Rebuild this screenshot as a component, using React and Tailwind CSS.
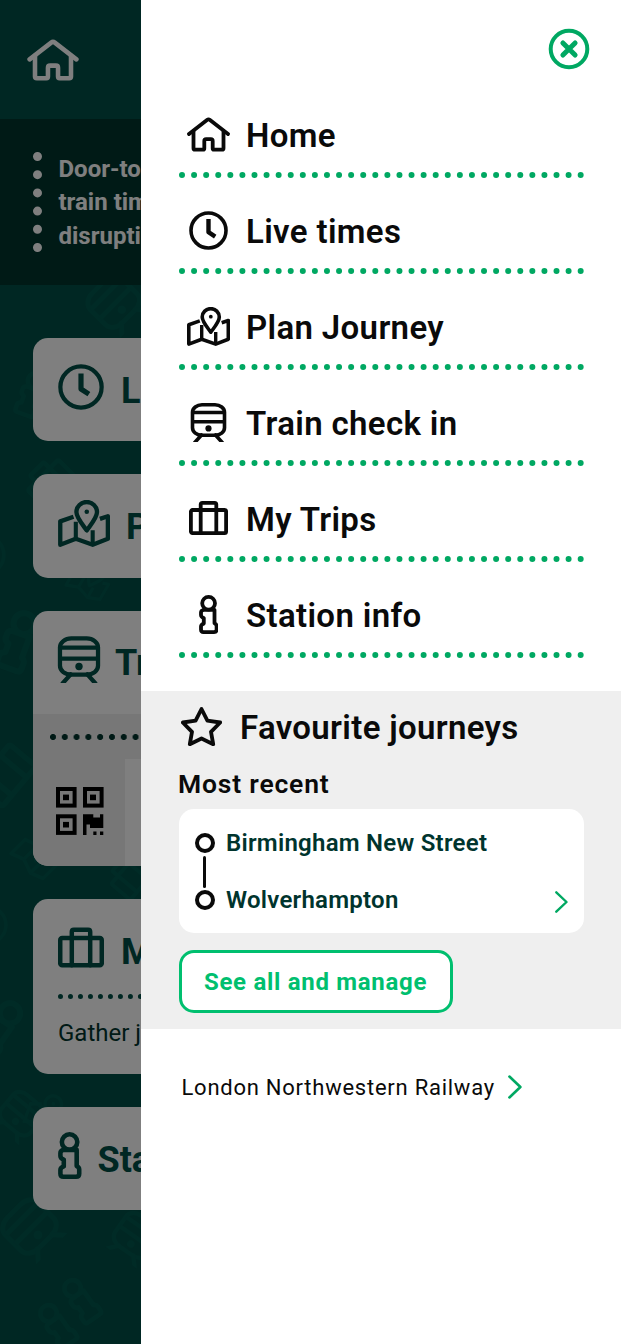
import React from "react";

function Svg({ w, h, stroke = 3.8, children, ...props }) {
  return (
    <svg
      viewBox={`0 0 ${w} ${h}`}
      fill="none"
      stroke="currentColor"
      strokeWidth={stroke}
      strokeLinecap="round"
      strokeLinejoin="round"
      {...props}
    >
      {children}
    </svg>
  );
}

function HomeIcon(props) {
  return (
    <Svg w={43} h={35} {...props}>
      <path d="M2 17 20 3Q21.5 1.8 23 3L41 17" />
      <path d="M6.5 14v17.2q0 1.5 1.5 1.5h8q1.3 0 1.3-1.5V24q0-1.8 1.8-1.8h4.8q1.8 0 1.8 1.8v7.2q0 1.5 1.3 1.5h8q1.5 0 1.5-1.5V14" />
    </Svg>
  );
}

function ClockIcon(props) {
  return (
    <Svg w={39} h={39} stroke={3.6} {...props}>
      <circle cx="19.5" cy="19.5" r="17.5" />
      <path d="M19.5 8v13.2l6.7 4.4" strokeWidth="4.4" strokeLinecap="butt" />
    </Svg>
  );
}

function MapIcon(props) {
  return (
    <Svg w={43} h={39} stroke={3.6} {...props}>
      <path d="M12.8 13.9 1.8 17.7v19.4l12.9-4.9 14 4.9 12.6-4.9V13.5l-6.6 2.2" strokeLinecap="butt" />
      <path d="M14.7 18v14.2M28.7 25v12.1" strokeLinecap="butt" strokeWidth="3.4" />
      <path d="M23.8 25.2c-4.4-6-8.6-10.6-8.6-15.2a8.5 8.3 0 0 1 17.1 0c0 4.6-4.1 9.2-8.5 15.2z" />
      <circle cx="23.8" cy="9.7" r="1.9" fill="currentColor" stroke="none" />
    </Svg>
  );
}

function TrainIcon(props) {
  return (
    <Svg w={37} h={39} stroke={3.6} {...props}>
      <rect x="2.5" y="1.8" width="32" height="30.5" rx="9.5" ry="7.5" />
      <path d="M3 9.5h31M3 18.7h31" strokeLinecap="butt" />
      <path d="M11.5 32 4.8 39.5M25.5 32l6.7 7.5" />
      <circle cx="18.5" cy="25.4" r="3.1" fill="currentColor" stroke="none" />
    </Svg>
  );
}

function CaseIcon(props) {
  return (
    <Svg w={39} h={34} {...props}>
      <rect x="1.9" y="9" width="35.2" height="23.1" rx="1.6" />
      <path d="M11.7 32V3.6q0-1.7 1.7-1.7h12.2q1.7 0 1.7 1.7V32" />
    </Svg>
  );
}

function InfoIcon(props) {
  return (
    <Svg w={19.5} h={39} {...props}>
      <circle cx="9.6" cy="8.3" r="6.4" />
      <path d="M4.8 14.8Q2 15.4 2 17.5V20q0 2 2.8 3v5.6Q2 29.6 2 31.5v3.1q0 2.5 2.5 2.5H15q2.6 0 2.6-2.5v-3.4q0-2-2.1-2.9V14.8z" />
    </Svg>
  );
}

function StarIcon(props) {
  return (
    <Svg w={41} h={39} {...props}>
      <path d="M20.5 2l5.900 11.700 12.800 1.800-9.200 9.300 2.200 12.400-11.700-5.700-11.700 5.700 2.200-12.400L1.800 15.500l12.800-1.800z" />
    </Svg>
  );
}

function CloseIcon(props) {
  return (
    <Svg w={42} h={42} stroke={4} {...props}>
      <circle cx="21" cy="21" r="18.3" />
      <path d="M14.900 14.900l12.200 12.200M27.100 14.900 14.900 27.100" strokeWidth="5" />
    </Svg>
  );
}

function Chevron(props) {
  return (
    <Svg w={13} h={22} stroke={2.4} {...props}>
      <path d="M1.300 1.300 11.500 11 1.300 20.700" />
    </Svg>
  );
}

function QrIcon(props) {
  const finders = [
    [0, 0],
    [27, 0],
    [0, 27.3],
  ];
  return (
    <svg viewBox="0 0 48 48" fill="currentColor" {...props}>
      {finders.map(([x, y]) => (
        <g key={`${x}-${y}`}>
          <rect x={x + 2} y={y + 2} width="16.600" height="16.600" fill="none" stroke="currentColor" strokeWidth="4" />
          <rect x={x + 7} y={y + 7.6} width="6" height="5.600" />
        </g>
      ))}
      <path d="M27 27.300h10.300v3.300H44v-3.300h3.300V41H34v-3.500h-3.500V48H27z" />
      <path d="M37.300 44.500h3.200V48h-3.200zM44 44.500h3.300V48H44z" />
    </svg>
  );
}

const doodles = [
  { Icon: TrainIcon, x: 116, y: 304, size: 54, rotate: -45 },
  { Icon: InfoIcon, x: 31, y: 394, size: 48, rotate: 20 },
  { Icon: CaseIcon, x: 50, y: 482, size: 48, rotate: -45 },
  { Icon: ClockIcon, x: -15, y: 555, size: 42, rotate: 0 },
  { Icon: MapIcon, x: 90, y: 580, size: 40, rotate: 30 },
  { Icon: InfoIcon, x: 18, y: 641, size: 64, rotate: 20 },
  { Icon: CaseIcon, x: 2, y: 772, size: 58, rotate: -50 },
  { Icon: MapIcon, x: 38, y: 855, size: 44, rotate: 45 },
  { Icon: CaseIcon, x: 130, y: 875, size: 42, rotate: -50 },
  { Icon: ClockIcon, x: -12, y: 925, size: 40, rotate: 0 },
  { Icon: InfoIcon, x: 0, y: 1028, size: 62, rotate: 35 },
  { Icon: TrainIcon, x: 20, y: 1116, size: 46, rotate: 40 },
  { Icon: MapIcon, x: 48, y: 1112, size: 42, rotate: 20 },
  { Icon: TrainIcon, x: 32, y: 1229, size: 56, rotate: -45 },
  { Icon: TrainIcon, x: 135, y: 1238, size: 48, rotate: 35 },
  { Icon: InfoIcon, x: 81, y: 1300, size: 50, rotate: -35 },
  { Icon: InfoIcon, x: 57, y: 1325, size: 50, rotate: -35 },
];

function Doodles() {
  return (
    <svg className="absolute inset-0 h-full w-full text-[#00564d]" viewBox="0 0 621 1344">
      {doodles.map(({ Icon, x, y, size, rotate }) => (
        <g key={`${x}-${y}`} transform={`translate(${x} ${y}) rotate(${rotate})`}>
          <Icon x={-size / 2} y={-size / 2} width={size} height={size} />
        </g>
      ))}
    </svg>
  );
}

const menuItems = [
  { label: "Home", Icon: HomeIcon, size: "h-[35px] w-[43px]" },
  { label: "Live times", Icon: ClockIcon, size: "h-[39px] w-[39px]" },
  { label: "Plan Journey", Icon: MapIcon, size: "h-[39px] w-[43px]" },
  { label: "Train check in", Icon: TrainIcon, size: "h-[39px] w-[37px]" },
  { label: "My Trips", Icon: CaseIcon, size: "h-[34px] w-[39px]" },
  { label: "Station info", Icon: InfoIcon, size: "h-[39px] w-[19.500px]" },
];

function HomePage() {
  const title = "whitespace-nowrap text-[36px] leading-[44px] font-bold";
  const card = "overflow-hidden rounded-[15px] bg-white";

  return (
    <div className="relative h-full w-full bg-[#004e46] text-[#004e46]">
      <Doodles />
      <div className="relative flex flex-col">
        <header className="flex h-[119px] items-center bg-[#004e46] pl-[27px] text-white">
          <HomeIcon className="h-[42px] w-[52px]" />
        </header>

        <div className="flex h-[166px] items-center bg-[#00342d] pl-[33px] text-white">
          <div className="mb-px h-[100px] border-l-9 border-dotted border-white" />
          <p className="mt-0.5 pl-[16.500px] text-[24px] leading-[33.500px] font-bold whitespace-nowrap">
            Door-to-door
            <br />
            train times and
            <br />
            disruption
          </p>
        </div>

        <main className="flex flex-col gap-[33px] px-[33px] pt-[53px]">
          <section className={`${card} flex h-[103px] items-start gap-[17px] pt-[25.500px] pl-[25px]`}>
            <ClockIcon className="h-[46px] w-[46px]" />
            <h2 className={`${title} mt-[5px]`}>Live times</h2>
          </section>

          <section className={`${card} flex h-[104px] items-start gap-4 pt-[26px] pl-[25px]`}>
            <MapIcon className="h-[47px] w-[52px]" />
            <h2 className={`${title} mt-[5px]`}>Plan Journey</h2>
          </section>

          <section className={`${card} h-[255px]`}>
            <div className="flex h-[103px] items-start gap-[14px] pt-[25px] pl-6">
              <TrainIcon className="h-[47px] w-[44px]" />
              <h2 className={`${title} mt-[5px]`}>Train check in</h2>
            </div>
            <div className="flex h-[152px] flex-col bg-[#efefef]">
              <div className="mx-[17px] mt-5 h-[6px] bg-[radial-gradient(circle_at_3px_3px,#00342d_2.700px,transparent_3.300px)] bg-[length:11.800px_6px]" />
              <div className="mt-[19px] flex flex-1">
                <div className="w-[92px] pt-7 pl-[23px] text-black">
                  <QrIcon className="h-12 w-12" />
                </div>
                <div className="flex-1 bg-white" />
              </div>
            </div>
          </section>

          <section className={`${card} h-[175px]`}>
            <div className="flex h-[95px] items-start gap-[17px] pt-[28px] pl-[25px]">
              <CaseIcon className="h-[41px] w-[46px]" />
              <h2 className={`${title} mt-[3px]`}>My Trips</h2>
            </div>
            <div className="mx-[25px] border-b-5 border-dotted border-[#004e46]" />
            <p className="mt-[18px] pl-[25px] text-[24px] leading-8 text-[#00342d]">Gather journeys</p>
          </section>

          <section className={`${card} flex h-[103px] items-start gap-[16px] pt-[25px] pl-[25px]`}>
            <InfoIcon className="h-[47px] w-[23.500px]" />
            <h2 className={`${title} mt-[6px]`}>Station info</h2>
          </section>
        </main>
      </div>
    </div>
  );
}

function Favourites() {
  return (
    <section className="mt-[33px] h-[338px] bg-[#efefef] pt-4 pr-[37px] pl-[38px]">
      <div className="flex h-10 items-center gap-[18px] pl-0.5">
        <StarIcon className="mb-0.5 h-[39px] w-[41px]" />
        <h2 className="pt-0.5 text-[33px] leading-10 font-semibold tracking-[0.330px]">Favourite journeys</h2>
      </div>
      <h3 className="mt-[21px] -ml-px pt-px text-[26.500px] leading-[30px] font-semibold tracking-[0.800px]">Most recent</h3>

      <div className="mt-[10px] flex h-[124px] rounded-[15px] bg-white pr-4 pl-4">
        <div className="flex w-5 flex-col items-center pt-6">
          <span className="h-5 w-5 rounded-full border-4 border-[#0a0a0a]" />
          <span className="mt-[3px] mr-px h-8 w-[3px] rounded-full bg-[#0a0a0a]" />
          <span className="mt-[2px] h-5 w-5 rounded-full border-4 border-[#0a0a0a]" />
        </div>
        <div className="flex flex-1 flex-col gap-[25px] pt-[18px] pl-[11px] text-[24px] leading-8 font-semibold tracking-[0.250px] text-[#00342d]">
          <span>Birmingham New Street</span>
          <span>Wolverhampton</span>
        </div>
        <Chevron className="mt-[82px] h-[22px] w-[13px] text-[#00a862]" />
      </div>

      <button className="mt-[17px] h-[63px] w-[274px] rounded-[15px] border-3 border-[#00bf6f] bg-white pr-px text-[24px] font-bold tracking-[0.700px] text-[#00bf6f]">
        See all and manage
      </button>
    </section>
  );
}

function Drawer() {
  return (
    <aside className="absolute inset-y-0 right-0 w-[480px] bg-white text-[#0a0a0a]">
      <div className="flex h-[82px] items-start justify-end pt-[28.400px] pr-[31px] text-[#00a862]">
        <CloseIcon className="h-[42px] w-[42px]" />
      </div>

      <nav className="pr-[37px] pl-[38px]">
        {menuItems.map(({ label, Icon, size }) => (
          <a key={label} className="flex h-24 items-center border-b-6 border-dotted border-[#00a862] pt-4">
            <span className="flex w-[59px] justify-center pb-0.5">
              <Icon className={size} />
            </span>
            <span className="pt-0.5 pl-2 text-[33px] leading-10 font-semibold tracking-[0.350px]">{label}</span>
          </a>
        ))}
      </nav>

      <Favourites />

      <a className="flex items-center gap-[13px] pt-[41px] pl-[40.500px] text-[22px] tracking-[0.750px]">
        <span className="pt-0.5 leading-8">London Northwestern Railway</span>
        <Chevron className="h-6 w-[14px] text-[#00a862]" />
      </a>
    </aside>
  );
}

export default function App() {
  return (
    <div className="relative h-[1344px] w-[621px] overflow-hidden font-['Roboto',sans-serif]">
      <HomePage />
      <div className="absolute inset-0 bg-black/50" />
      <Drawer />
    </div>
  );
}
